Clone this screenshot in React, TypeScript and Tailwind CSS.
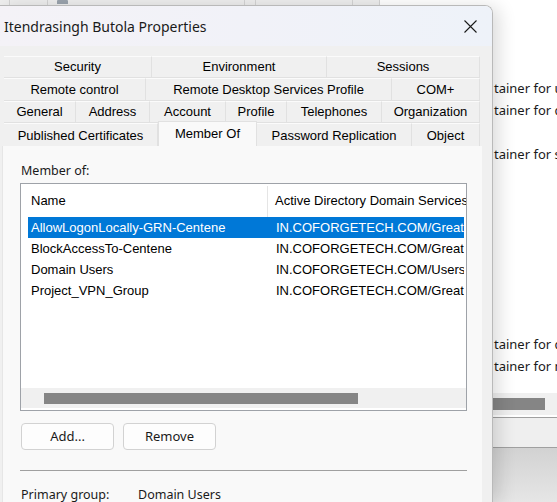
import React from 'react';

const segoe = "font-['Segoe_UI','Noto_Sans',sans-serif]";
const classic = "font-['Liberation_Sans',Arial,sans-serif]";

const tabRows = [
  [
    { label: 'Security', w: 'w-[148px]' },
    { label: 'Environment', w: 'w-[175px]' },
    { label: 'Sessions', w: 'w-[153px]' },
  ],
  [
    { label: 'Remote control', w: 'w-[142px]' },
    { label: 'Remote Desktop Services Profile', w: 'w-[246px]' },
    { label: 'COM+', w: 'w-[88px]' },
  ],
  [
    { label: 'General', w: 'w-[72px]' },
    { label: 'Address', w: 'w-[74px]' },
    { label: 'Account', w: 'w-[76px]' },
    { label: 'Profile', w: 'w-[61px]' },
    { label: 'Telephones', w: 'w-[95px]' },
    { label: 'Organization', w: 'w-[98px]' },
  ],
];

const lastRow = [
  { label: 'Published Certificates', w: 'w-[154px]' },
  { label: 'Member Of', w: 'w-[99px]', active: true },
  { label: 'Password Replication', w: 'w-[155px]' },
  { label: 'Object', w: 'w-[68px]' },
];

const groups = [
  { name: 'AllowLogonLocally-GRN-Centene', path: 'IN.COFORGETECH.COM/Great Plains/Groups', selected: true },
  { name: 'BlockAccessTo-Centene', path: 'IN.COFORGETECH.COM/Great Plains/Groups' },
  { name: 'Domain Users', path: 'IN.COFORGETECH.COM/Users' },
  { name: 'Project_VPN_Group', path: 'IN.COFORGETECH.COM/Great Plains/Groups' },
];

const Tab = ({ label, w }: { label: string; w: string }) => (
  <div className={`${w} h-full flex items-center justify-center bg-[#f0f0f0] border-r border-b border-[#e1e1e1] border-t border-t-[#fbfbfb] text-[13px] text-black whitespace-nowrap`}>
    {label}
  </div>
);

const App = () => {
  return (
    <div className={`w-[557px] h-[502px] overflow-hidden bg-white flex ${segoe}`}>
      {/* dialog column */}
      <div className="w-[493px] shrink-0 flex flex-col relative z-10 bg-white">
        <div className="h-[5px] flex bg-white">
          <div className="w-[10px] bg-[#eeeeee] border-r border-[#d4d4d4]"></div>
          <div className="w-[38px] bg-[#eeeeee] border-r border-[#d4d4d4]"></div>
          <div className="w-[197px] bg-[#eeeeee] border-r border-[#d4d4d4] pl-[9px]">
            <div className="w-[11px] h-[4px] bg-[#9aa3ad] rounded-t-[1px]"></div>
          </div>
          <div className="w-[11px] bg-[#eeeeee] border-r border-[#d4d4d4]"></div>
          <div className="w-[97px] bg-[#eeeeee] border-r border-[#d4d4d4]"></div>
          <div className="w-[27px] bg-[#eeeeee] border-r border-[#d4d4d4]"></div>
        </div>

        <div className="flex-1 flex flex-col rounded-tr-[8px] border-t border-r border-[#b9b9b9] overflow-hidden shadow-[6px_2px_18px_rgba(0,0,0,0.14)]">
          {/* title bar */}
          <div className="h-[40px] shrink-0 flex items-center justify-between pl-[4px] pr-[15px] bg-gradient-to-r from-[#f4f2f7] to-[#eef2f9]">
            <span className="text-[14px] text-[#1a1a1a]">Itendrasingh Butola Properties</span>
            <svg width="13" height="13" viewBox="0 0 13 13">
              <path d="M0.5 0.5 L12.5 12.5 M12.5 0.5 L0.5 12.5" stroke="#1a1a1a" strokeWidth="1.1" />
            </svg>
          </div>

          {/* body */}
          <div className="flex-1 flex flex-col bg-[#f0f0f0] pt-[10px] pl-[2px]">
            <div className={`w-[480px] px-[2px] flex flex-col ${classic}`}>
              {tabRows.map((row, i) => (
                <div key={i} className={`flex ${i === 1 ? 'h-[23px]' : 'h-[22px]'}`}>
                  {row.map((t) => (
                    <Tab key={t.label} label={t.label} w={t.w} />
                  ))}
                </div>
              ))}
              <div className="flex items-end h-[23px]">
                {lastRow.map((t) =>
                  t.active ? (
                    <div
                      key={t.label}
                      className={`${t.w} h-[25px] relative z-10 flex items-center justify-center bg-[#f9f9f9] border-x border-t border-[#e1e1e1] text-[13px] text-black`}
                    >
                      {t.label}
                    </div>
                  ) : (
                    <div
                      key={t.label}
                      className={`${t.w} h-full flex items-center justify-center pt-[2px] bg-[#f0f0f0] border-r border-[#e1e1e1] border-t border-t-[#fbfbfb] text-[13px] text-black whitespace-nowrap`}
                    >
                      {t.label}
                    </div>
                  )
                )}
              </div>
            </div>

            {/* tab panel */}
            <div className="w-[480px] flex-1 bg-[#f9f9f9] border-l border-[#e6e6e6] pl-[17px] pt-[16px]">
              <div className="pl-[1px] text-[12.5px] leading-[17px] text-[#1a1a1a]">Member of:</div>

              <div className={`mt-[4px] w-[447px] h-[228px] border border-[#9ea2a8] bg-white flex flex-col overflow-hidden ${classic} text-[13px]`}>
                <div className="h-[33px] shrink-0 flex items-end">
                  <div className="w-[247px] h-[31px] flex items-center pl-[10px] pb-[2px] border-r border-[#e5e5e5] text-black">
                    Name
                  </div>
                  <div className="flex-1 h-[31px] flex items-center pl-[7px] pb-[2px] overflow-hidden whitespace-nowrap text-black">
                    Active Directory Domain Services Folder
                  </div>
                </div>

                {groups.map((g) => (
                  <div
                    key={g.name}
                    className={`h-[21px] shrink-0 ml-[7px] mr-[2px] flex items-center overflow-hidden whitespace-nowrap ${
                      g.selected ? 'bg-[#0078d7] text-white' : 'text-black'
                    }`}
                  >
                    <div className="w-[240px] shrink-0 pl-[3px]">{g.name}</div>
                    <div className="flex-1 pl-[8px] overflow-hidden">{g.path}</div>
                  </div>
                ))}

                <div className="flex-1"></div>

                <div className="h-[20px] shrink-0 bg-[#f0f0f0] flex items-center">
                  <div className="ml-[23px] w-[314px] h-[11px] bg-[#858585]"></div>
                </div>
                <div className="h-[2px] shrink-0"></div>
              </div>

              <div className="mt-[12px] flex gap-[9px] pl-[1px]">
                <button className="w-[93px] h-[27px] rounded-[4px] border border-[#d2d2d2] bg-[#fdfdfd] text-[13px] text-[#1a1a1a]">
                  Add...
                </button>
                <button className="w-[93px] h-[27px] rounded-[4px] border border-[#d2d2d2] bg-[#fdfdfd] text-[13px] text-[#1a1a1a]">
                  Remove
                </button>
              </div>

              <div className="mt-[20px] w-[447px] h-px bg-[#a0a0a0]"></div>

              <div className="mt-[15px] pl-[1px] flex text-[12.5px] leading-[17px] text-[#1a1a1a]">
                <span className="w-[117px]">Primary group:</span>
                <span>Domain Users</span>
              </div>
            </div>
          </div>
        </div>
      </div>

      {/* background window */}
      <div className="flex-1 flex flex-col bg-white overflow-hidden whitespace-nowrap text-[13px] text-[#1a1a1a]">
        <div className="mt-[77px] h-[22px] leading-[22px] pl-[1px]">tainer for upgraded computer accounts</div>
        <div className="h-[23px] leading-[23px] pl-[1px]">tainer for domain controllers</div>
        <div className="mt-[21px] h-[22px] leading-[22px] pl-[1px]">tainer for security identifiers</div>
        <div className="mt-[168px] h-[22px] leading-[22px] pl-[1px]">tainer for deleted objects</div>
        <div className="h-[22px] leading-[22px] pl-[1px]">tainer for managed service accounts</div>
        <div className="mt-[16px] h-[22px] bg-[#f0f0f0] flex items-center">
          <div className="w-[52px] h-[12px] bg-[#858585]"></div>
        </div>
        <div className="h-[2px]"></div>
        <div className="h-[31px] border-y border-[#a0a0a0] bg-[#efefef]"></div>
        <div className="flex-1 bg-gradient-to-b from-[#d2d2d2] to-[#e6e6e6]"></div>
      </div>
    </div>
  );
};

export default App;
